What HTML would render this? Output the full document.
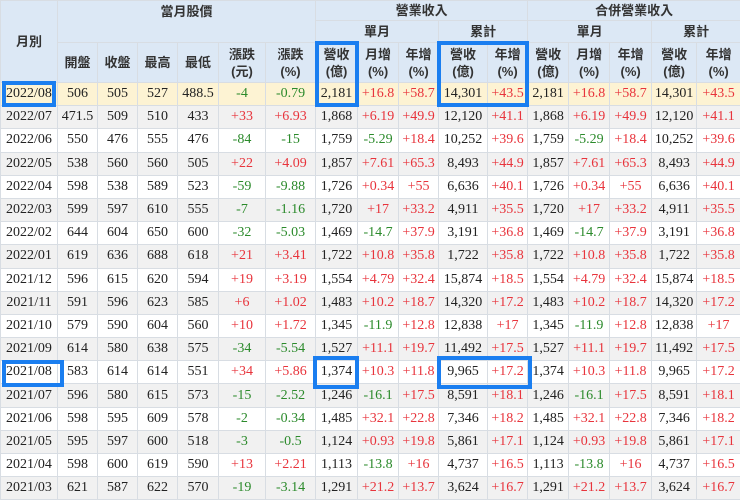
<!DOCTYPE html>
<html><head><meta charset="utf-8"><style>
body{margin:0;width:740px;height:499px;overflow:hidden;background:#fff;position:relative}
table{border-collapse:collapse;table-layout:fixed;position:absolute;left:0;top:0;width:740px}
td,th{border:1px solid #d8dde3;text-align:center;padding:0;white-space:nowrap;overflow:hidden}
th{background:#dce8f5;font-family:"Liberation Sans","Noto Sans CJK TC",sans-serif;font-weight:bold;font-size:13px;color:#333;line-height:17px}
td{font-family:"Liberation Serif","Noto Serif CJK SC",serif;font-size:14px;color:#222;height:22.2px;line-height:16px}
tr.y td{background:#fdf3d3}
tr.g td{background:#f1f1f1}
.r{color:#e8343c!important}.n{color:#2b8a2b!important}
.b{position:absolute;border:4px solid #1a7ef0;box-sizing:border-box}
</style></head><body>
<table>
<colgroup><col style="width:57px"><col style="width:40px"><col style="width:40px"><col style="width:40px"><col style="width:41px"><col style="width:47px"><col style="width:50px"><col style="width:42px"><col style="width:41px"><col style="width:40px"><col style="width:49px"><col style="width:40px"><col style="width:41px"><col style="width:41px"><col style="width:42px"><col style="width:45px"><col style="width:44px"></colgroup>
<tr style="height:20px"><th rowspan="3">月別</th><th colspan="6" rowspan="2" style="vertical-align:top;padding-top:2px">當月股價</th><th colspan="5">營業收入</th><th colspan="5">合併營業收入</th></tr>
<tr style="height:22px"><th colspan="3">單月</th><th colspan="2">累計</th><th colspan="3">單月</th><th colspan="2">累計</th></tr>
<tr style="height:40px"><th>開盤</th><th>收盤</th><th>最高</th><th>最低</th><th>漲跌<br>(元)</th><th>漲跌<br>(%)</th><th>營收<br>(億)</th><th>月增<br>(%)</th><th>年增<br>(%)</th><th>營收<br>(億)</th><th>年增<br>(%)</th><th>營收<br>(億)</th><th>月增<br>(%)</th><th>年增<br>(%)</th><th>營收<br>(億)</th><th>年增<br>(%)</th></tr>
<tr class="y"><td>2022/08</td><td>506</td><td>505</td><td>527</td><td>488.5</td><td class="n">-4</td><td class="n">-0.79</td><td>2,181</td><td class="r">+16.8</td><td class="r">+58.7</td><td>14,301</td><td class="r">+43.5</td><td>2,181</td><td class="r">+16.8</td><td class="r">+58.7</td><td>14,301</td><td class="r">+43.5</td></tr>
<tr class="g"><td>2022/07</td><td>471.5</td><td>509</td><td>510</td><td>433</td><td class="r">+33</td><td class="r">+6.93</td><td>1,868</td><td class="r">+6.19</td><td class="r">+49.9</td><td>12,120</td><td class="r">+41.1</td><td>1,868</td><td class="r">+6.19</td><td class="r">+49.9</td><td>12,120</td><td class="r">+41.1</td></tr>
<tr><td>2022/06</td><td>550</td><td>476</td><td>555</td><td>476</td><td class="n">-84</td><td class="n">-15</td><td>1,759</td><td class="n">-5.29</td><td class="r">+18.4</td><td>10,252</td><td class="r">+39.6</td><td>1,759</td><td class="n">-5.29</td><td class="r">+18.4</td><td>10,252</td><td class="r">+39.6</td></tr>
<tr class="g"><td>2022/05</td><td>538</td><td>560</td><td>560</td><td>505</td><td class="r">+22</td><td class="r">+4.09</td><td>1,857</td><td class="r">+7.61</td><td class="r">+65.3</td><td>8,493</td><td class="r">+44.9</td><td>1,857</td><td class="r">+7.61</td><td class="r">+65.3</td><td>8,493</td><td class="r">+44.9</td></tr>
<tr><td>2022/04</td><td>598</td><td>538</td><td>589</td><td>523</td><td class="n">-59</td><td class="n">-9.88</td><td>1,726</td><td class="r">+0.34</td><td class="r">+55</td><td>6,636</td><td class="r">+40.1</td><td>1,726</td><td class="r">+0.34</td><td class="r">+55</td><td>6,636</td><td class="r">+40.1</td></tr>
<tr class="g"><td>2022/03</td><td>599</td><td>597</td><td>610</td><td>555</td><td class="n">-7</td><td class="n">-1.16</td><td>1,720</td><td class="r">+17</td><td class="r">+33.2</td><td>4,911</td><td class="r">+35.5</td><td>1,720</td><td class="r">+17</td><td class="r">+33.2</td><td>4,911</td><td class="r">+35.5</td></tr>
<tr><td>2022/02</td><td>644</td><td>604</td><td>650</td><td>600</td><td class="n">-32</td><td class="n">-5.03</td><td>1,469</td><td class="n">-14.7</td><td class="r">+37.9</td><td>3,191</td><td class="r">+36.8</td><td>1,469</td><td class="n">-14.7</td><td class="r">+37.9</td><td>3,191</td><td class="r">+36.8</td></tr>
<tr class="g"><td>2022/01</td><td>619</td><td>636</td><td>688</td><td>618</td><td class="r">+21</td><td class="r">+3.41</td><td>1,722</td><td class="r">+10.8</td><td class="r">+35.8</td><td>1,722</td><td class="r">+35.8</td><td>1,722</td><td class="r">+10.8</td><td class="r">+35.8</td><td>1,722</td><td class="r">+35.8</td></tr>
<tr><td>2021/12</td><td>596</td><td>615</td><td>620</td><td>594</td><td class="r">+19</td><td class="r">+3.19</td><td>1,554</td><td class="r">+4.79</td><td class="r">+32.4</td><td>15,874</td><td class="r">+18.5</td><td>1,554</td><td class="r">+4.79</td><td class="r">+32.4</td><td>15,874</td><td class="r">+18.5</td></tr>
<tr class="g"><td>2021/11</td><td>591</td><td>596</td><td>623</td><td>585</td><td class="r">+6</td><td class="r">+1.02</td><td>1,483</td><td class="r">+10.2</td><td class="r">+18.7</td><td>14,320</td><td class="r">+17.2</td><td>1,483</td><td class="r">+10.2</td><td class="r">+18.7</td><td>14,320</td><td class="r">+17.2</td></tr>
<tr><td>2021/10</td><td>579</td><td>590</td><td>604</td><td>560</td><td class="r">+10</td><td class="r">+1.72</td><td>1,345</td><td class="n">-11.9</td><td class="r">+12.8</td><td>12,838</td><td class="r">+17</td><td>1,345</td><td class="n">-11.9</td><td class="r">+12.8</td><td>12,838</td><td class="r">+17</td></tr>
<tr class="g"><td>2021/09</td><td>614</td><td>580</td><td>638</td><td>575</td><td class="n">-34</td><td class="n">-5.54</td><td>1,527</td><td class="r">+11.1</td><td class="r">+19.7</td><td>11,492</td><td class="r">+17.5</td><td>1,527</td><td class="r">+11.1</td><td class="r">+19.7</td><td>11,492</td><td class="r">+17.5</td></tr>
<tr><td>2021/08</td><td>583</td><td>614</td><td>614</td><td>551</td><td class="r">+34</td><td class="r">+5.86</td><td>1,374</td><td class="r">+10.3</td><td class="r">+11.8</td><td>9,965</td><td class="r">+17.2</td><td>1,374</td><td class="r">+10.3</td><td class="r">+11.8</td><td>9,965</td><td class="r">+17.2</td></tr>
<tr class="g"><td>2021/07</td><td>596</td><td>580</td><td>615</td><td>573</td><td class="n">-15</td><td class="n">-2.52</td><td>1,246</td><td class="n">-16.1</td><td class="r">+17.5</td><td>8,591</td><td class="r">+18.1</td><td>1,246</td><td class="n">-16.1</td><td class="r">+17.5</td><td>8,591</td><td class="r">+18.1</td></tr>
<tr><td>2021/06</td><td>598</td><td>595</td><td>609</td><td>578</td><td class="n">-2</td><td class="n">-0.34</td><td>1,485</td><td class="r">+32.1</td><td class="r">+22.8</td><td>7,346</td><td class="r">+18.2</td><td>1,485</td><td class="r">+32.1</td><td class="r">+22.8</td><td>7,346</td><td class="r">+18.2</td></tr>
<tr class="g"><td>2021/05</td><td>595</td><td>597</td><td>600</td><td>518</td><td class="n">-3</td><td class="n">-0.5</td><td>1,124</td><td class="r">+0.93</td><td class="r">+19.8</td><td>5,861</td><td class="r">+17.1</td><td>1,124</td><td class="r">+0.93</td><td class="r">+19.8</td><td>5,861</td><td class="r">+17.1</td></tr>
<tr><td>2021/04</td><td>598</td><td>600</td><td>619</td><td>590</td><td class="r">+13</td><td class="r">+2.21</td><td>1,113</td><td class="n">-13.8</td><td class="r">+16</td><td>4,737</td><td class="r">+16.5</td><td>1,113</td><td class="n">-13.8</td><td class="r">+16</td><td>4,737</td><td class="r">+16.5</td></tr>
<tr class="g"><td>2021/03</td><td>621</td><td>587</td><td>622</td><td>570</td><td class="n">-19</td><td class="n">-3.14</td><td>1,291</td><td class="r">+21.2</td><td class="r">+13.7</td><td>3,624</td><td class="r">+16.7</td><td>1,291</td><td class="r">+21.2</td><td class="r">+13.7</td><td>3,624</td><td class="r">+16.7</td></tr>
</table>
<div class="b" style="left:2px;top:81px;width:54px;height:26px"></div>
<div class="b" style="left:315px;top:41px;width:44px;height:66px"></div>
<div class="b" style="left:437px;top:41px;width:92px;height:66px"></div>
<div class="b" style="left:2px;top:360px;width:62px;height:27px"></div>
<div class="b" style="left:313px;top:356px;width:46px;height:33px"></div>
<div class="b" style="left:437px;top:356px;width:95px;height:33px"></div>
</body></html>
